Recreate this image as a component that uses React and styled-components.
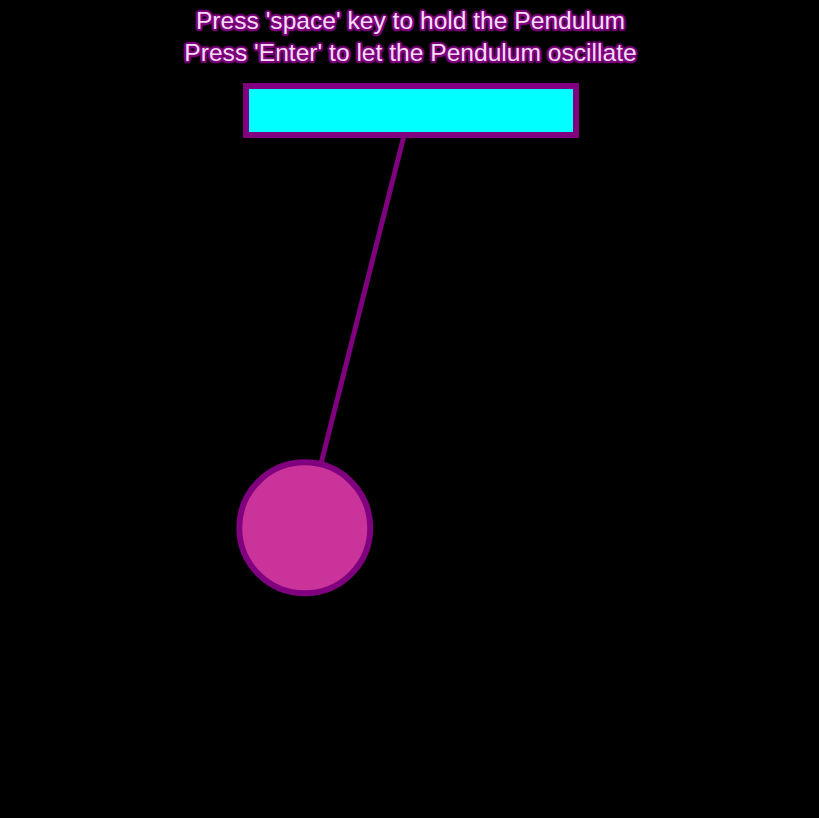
import React from 'react';
import styled, { createGlobalStyle } from 'styled-components';

const GlobalStyle = createGlobalStyle`
    html, body {
        margin: 0;
        padding: 0;
        background: #000;
    }
`;

const Page = styled.div`
    width: 819px;
    height: 818px;
    background: #000;
    display: flex;
    flex-direction: column;
    align-items: center;
    overflow: hidden;
`;

const Hint = styled.div`
    display: flex;
    flex-direction: column;
    align-items: center;
    padding-top: 5px;
    padding-left: 2px;
`;

const HintLine = styled.p`
    margin: 0;
    height: 32px;
    line-height: 32px;
    font-family: "Liberation Sans", Arial, sans-serif;
    font-size: 24.6px;
    color: #f4dcf4;
    text-shadow:
        2px 0 1px #800080, -2px 0 1px #800080, 0 2px 1px #800080, 0 -2px 1px #800080,
        1.5px 1.5px 1px #800080, -1.5px -1.5px 1px #800080, 1.5px -1.5px 1px #800080, -1.5px 1.5px 1px #800080,
        0 0 4px #800080;
`;

const Stage = styled.svg`
    display: block;
`;

const PIVOT = { x: 410.5, y: 41 };
const LENGTH = 431;
const ANGLE = 14.2;

const Pendulum = () => {
    const rad = (ANGLE * Math.PI) / 180;
    const bx = PIVOT.x - LENGTH * Math.sin(rad);
    const by = PIVOT.y + LENGTH * Math.cos(rad);
    return (
        <Stage width="819" height="749" viewBox="0 0 819 749">
            <line x1={PIVOT.x} y1={PIVOT.y} x2={bx} y2={by} stroke="#800080" strokeWidth="5" />
            <rect x="246" y="17" width="330" height="49" fill="#00ffff" stroke="#800080" strokeWidth="6" />
            <circle cx={bx} cy={by} r="65.5" fill="#c9339a" stroke="#800080" strokeWidth="6" />
        </Stage>
    );
};

const App = () => {
    return (
        <Page>
            <GlobalStyle />
            <Hint>
                <HintLine>Press 'space' key to hold the Pendulum</HintLine>
                <HintLine>Press 'Enter' to let the Pendulum oscillate</HintLine>
            </Hint>
            <Pendulum />
        </Page>
    );
};

export default App;
